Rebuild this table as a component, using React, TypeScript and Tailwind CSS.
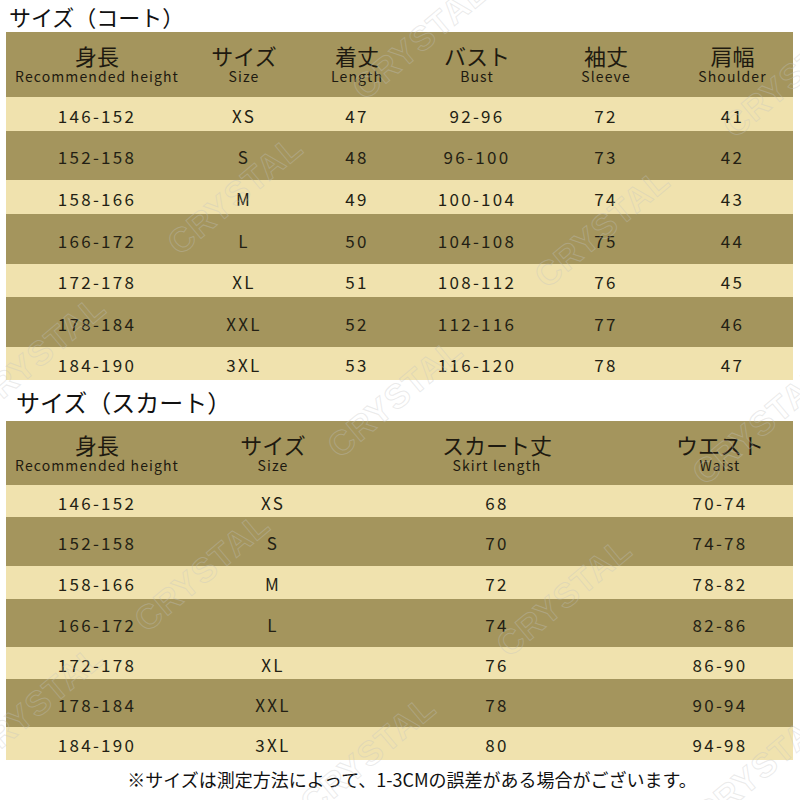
import React from 'react'

const COAT_HEAD = [
  { jp: '身長', en: 'Recommended height' },
  { jp: 'サイズ', en: 'Size' },
  { jp: '着丈', en: 'Length' },
  { jp: 'バスト', en: 'Bust' },
  { jp: '袖丈', en: 'Sleeve' },
  { jp: '肩幅', en: 'Shoulder' },
]

const COAT_ROWS = [
  ['146-152', 'XS', '47', '92-96', '72', '41'],
  ['152-158', 'S', '48', '96-100', '73', '42'],
  ['158-166', 'M', '49', '100-104', '74', '43'],
  ['166-172', 'L', '50', '104-108', '75', '44'],
  ['172-178', 'XL', '51', '108-112', '76', '45'],
  ['178-184', 'XXL', '52', '112-116', '77', '46'],
  ['184-190', '3XL', '53', '116-120', '78', '47'],
]

const SKIRT_HEAD = [
  { jp: '身長', en: 'Recommended height' },
  { jp: 'サイズ', en: 'Size' },
  { jp: 'スカート丈', en: 'Skirt length' },
  { jp: 'ウエスト', en: 'Waist' },
]

const SKIRT_ROWS = [
  ['146-152', 'XS', '68', '70-74'],
  ['152-158', 'S', '70', '74-78'],
  ['158-166', 'M', '72', '78-82'],
  ['166-172', 'L', '74', '82-86'],
  ['172-178', 'XL', '76', '86-90'],
  ['178-184', 'XXL', '78', '90-94'],
  ['184-190', '3XL', '80', '94-98'],
]

// row heights in the original alternate: short light rows, tall dark rows
const COAT_ROW_H = ['h-[34px]', 'h-[49px]', 'h-[34px]', 'h-[50px]', 'h-[33px]', 'h-[50px]', 'h-[33px]']
const SKIRT_ROW_H = ['h-[32px]', 'h-[49px]', 'h-[33px]', 'h-[48px]', 'h-[32px]', 'h-[48px]', 'h-[33px]']

const WATERMARKS = [
  'left-[235px] top-[195px]',
  'left-[602px] top-[228px]',
  'left-[420px] top-[40px]',
  'left-[790px] top-[78px]',
  'left-[38px] top-[355px]',
  'left-[395px] top-[398px]',
  'left-[760px] top-[425px]',
  'left-[202px] top-[572px]',
  'left-[564px] top-[597px]',
  'left-[36px] top-[705px]',
  'left-[368px] top-[755px]',
  'left-[762px] top-[767px]',
]

function HeadCell({ jp, en, extra = '' }: { jp: string; en: string; extra?: string }) {
  return (
    <div className={`flex flex-col items-center justify-center pb-[2px] ${extra}`}>
      <span className="text-[22px] leading-[24px] text-[#1e1a10]">{jp}</span>
      <span className="text-[14px] leading-[16px] tracking-[1.1px] text-[#1e1a10] mt-[1px]">{en}</span>
    </div>
  )
}

export default function App() {
  return (
    <div className="relative w-[800px] h-[800px] overflow-hidden bg-white font-['Noto_Sans_CJK_JP','Noto_Sans',sans-serif]">
      {/* Coat title */}
      <div className="h-[32px] pl-[9px] pt-[3px] text-[22px] leading-[26px] text-[#111]">サイズ（コート）</div>

      {/* Coat table */}
      <div className="ml-[6px] w-[787px]">
        <div className="grid grid-cols-[182px_112px_114px_126px_132px_121px] h-[65px] bg-[#a4955d]">
          {COAT_HEAD.map((h) => (
            <HeadCell key={h.en} jp={h.jp} en={h.en} />
          ))}
        </div>
        {COAT_ROWS.map((row, i) => (
          <div
            key={row[0]}
            className={`grid grid-cols-[182px_112px_114px_126px_132px_121px] ${COAT_ROW_H[i]} ${
              i % 2 === 0 ? 'bg-[#f0e2ae]' : 'bg-[#a4955d]'
            }`}
          >
            {row.map((cell, j) => (
              <div key={j} className="flex items-center justify-center pt-[3px] text-[17px] tracking-[2.3px] text-[#231f14]">
                {cell}
              </div>
            ))}
          </div>
        ))}
      </div>

      {/* Skirt title */}
      <div className="h-[41px] pl-[16px] pt-[8px] text-[24px] leading-[28px] text-[#111]">サイズ（スカート）</div>

      {/* Skirt table */}
      <div className="ml-[6px] w-[787px]">
        <div className="grid grid-cols-[182px_170px_278px_157px] h-[64px] bg-[#a4955d]">
          {SKIRT_HEAD.map((h, j) => (
            <HeadCell key={h.en} jp={h.jp} en={h.en} extra={j === 3 ? 'pl-[11px]' : ''} />
          ))}
        </div>
        {SKIRT_ROWS.map((row, i) => (
          <div
            key={row[0]}
            className={`grid grid-cols-[182px_170px_278px_157px] ${SKIRT_ROW_H[i]} ${
              i % 2 === 0 ? 'bg-[#f0e2ae]' : 'bg-[#a4955d]'
            }`}
          >
            {row.map((cell, j) => (
              <div
                key={j}
                className={`flex items-center justify-center pt-[3px] text-[17px] tracking-[2.3px] text-[#231f14] ${
                  j === 3 ? 'pl-[11px]' : ''
                }`}
              >
                {cell}
              </div>
            ))}
          </div>
        ))}
      </div>

      {/* Footnote */}
      <div className="h-[40px] pl-[24px] pt-[6px] text-center text-[18px] leading-[26px] text-[#111]">
        ※サイズは測定方法によって、1-3CMの誤差がある場合がございます。
      </div>

      {/* CRYSTAL watermarks */}
      {WATERMARKS.map((pos) => (
        <span
          key={pos}
          aria-hidden="true"
          className={`pointer-events-none absolute ${pos} -translate-x-1/2 -translate-y-1/2 rotate-[-40deg] font-['Liberation_Sans',sans-serif] text-[34px] font-bold tracking-[1px] text-transparent [-webkit-text-stroke:1px_rgba(195,195,195,0.35)]`}
        >
          CRYSTAL
        </span>
      ))}
    </div>
  )
}
